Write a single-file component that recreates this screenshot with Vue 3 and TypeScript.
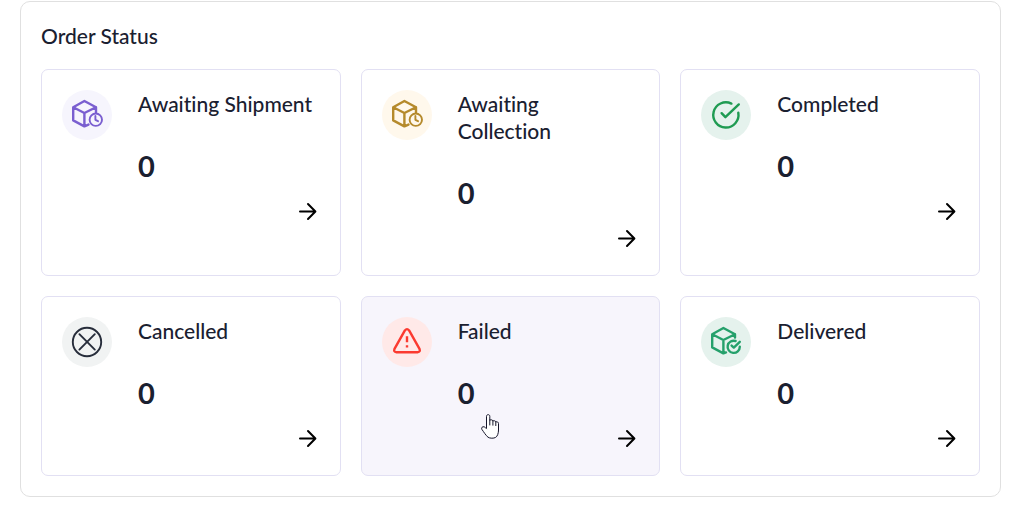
<script setup lang="ts">
type Icon = 'box-clock' | 'check' | 'cross' | 'warning' | 'box-check'

interface Status {
  label: string
  count: number
  icon: Icon
  tone: string
  active?: boolean
}

const statuses: Status[] = [
  { label: 'Awaiting Shipment', count: 0, icon: 'box-clock', tone: 'violet' },
  { label: 'Awaiting Collection', count: 0, icon: 'box-clock', tone: 'gold' },
  { label: 'Completed', count: 0, icon: 'check', tone: 'green' },
  { label: 'Cancelled', count: 0, icon: 'cross', tone: 'grey' },
  { label: 'Failed', count: 0, icon: 'warning', tone: 'red', active: true },
  { label: 'Delivered', count: 0, icon: 'box-check', tone: 'teal' },
]
</script>

<template>
  <section class="panel" aria-labelledby="order-status">
    <h2 id="order-status" class="heading">Order Status</h2>
    <div class="grid">
      <a
        v-for="status in statuses"
        :key="status.label"
        href="#"
        class="card"
        :class="{ active: status.active }"
      >
        <span class="badge" :class="status.tone">
          <svg viewBox="0 0 50 50" aria-hidden="true">
            <template v-if="status.icon === 'box-clock'">
              <path d="M34 22.5V17.2L22.4 11 11.2 17.2V30.4L22.4 36.4 26.5 34.6M11.2 17.2 22.4 23 34 17.2M22.4 23V36.4" />
              <circle class="fine" cx="33.8" cy="29.7" r="6.2" />
              <path class="fine" d="M33.4 26V29.8L36 31.2" />
            </template>
            <template v-else-if="status.icon === 'check'">
              <path d="M30.4 13.6A12.6 12.6 0 1 0 37.3 22.8M20.6 23.2 24.4 27.2 37.8 14.4" />
            </template>
            <template v-else-if="status.icon === 'cross'">
              <circle class="fine" cx="25" cy="25" r="14.2" />
              <path class="fine" d="M17.4 17.2 32.8 32.6M32.8 17.2 17.4 32.6" />
            </template>
            <template v-else-if="status.icon === 'warning'">
              <path d="M22.9 13.4 12.5 31.8Q11.3 35 14.4 35.2H35.6Q38.7 35 37.5 31.8L27.1 13.4Q25 10.8 22.9 13.4Z" />
              <path class="flat" d="M25 19.2V25.2M25 28.3V30.6" />
            </template>
            <template v-else>
              <path d="M34 20.6V17.2L22.4 11 11.2 17.2V30.4L22.4 36.4 25 35.4M11.2 17.2 22.4 23 34 17.2M22.4 23V36.4" />
              <path d="M34.6 24A6.1 6.1 0 1 0 38.8 29.8M30.6 28.6 32.8 30.6 38.8 24.8" />
            </template>
          </svg>
        </span>
        <span class="body">
          <span class="label">{{ status.label }}</span>
          <span class="count">{{ status.count }}</span>
          <svg class="arrow" viewBox="0 0 24 24" aria-hidden="true">
            <path d="M4 12.5H19M12 5 19.4 12.5 12 20" />
          </svg>
        </span>
        <svg v-if="status.active" class="pointer" viewBox="0 0 18 25" aria-hidden="true">
          <path d="M5.5 13.8V2.3C5.5 0.1 8.8 0.1 8.8 2.3V6.2C9.8 5.5 11.6 5.7 11.9 7 13 6.4 14.5 6.8 14.8 7.9 16.2 7.4 17.5 8.2 17.5 9.6V16C17.5 19 16.5 22.5 14.6 23.4 12.8 24.5 8.8 24.5 7 23.2 4.8 21.4 2.8 18 .9 15.4 0 13.6 1.5 12.4 3 12.8 4 13 4.6 13.8 5.5 14.8" />
          <path d="M8.8 6V11M11.9 7V11.2M14.8 8V11.6" />
        </svg>
      </a>
    </div>
  </section>
</template>

<style>
body {
  background: #fff;
}
</style>

<style scoped>
.panel {
  margin: 1px 20px 0;
  padding: 20px;
  border: 1px solid #e0e0e0;
  border-radius: 10px;
  color: #1a2030;
  font-family: Lato, 'Liberation Sans', sans-serif;
  font-variant-ligatures: none;
}

.heading {
  margin: 0 0 20px;
  font-size: 21px;
  font-weight: 500;
  line-height: 27px;
}

.grid {
  display: grid;
  grid-template-columns: repeat(3, 1fr);
  gap: 20px;
}

.card {
  position: relative;
  display: flex;
  gap: 26px;
  padding: 20px 20px 25px;
  border: 1px solid #e2e0f3;
  border-radius: 7px;
  color: inherit;
  text-decoration: none;
}

.card.active {
  background: #f7f5fc;
}

.badge {
  flex: none;
  width: 50px;
  height: 50px;
  border-radius: 50%;
}

.badge svg {
  display: block;
  width: 100%;
  height: 100%;
  fill: none;
  stroke: currentColor;
  stroke-width: 2.4;
  stroke-linecap: round;
  stroke-linejoin: round;
}

.badge .fine {
  stroke-width: 1.9;
}

.badge .flat {
  stroke-linecap: butt;
}

.violet {
  background: #f6f5fd;
  color: #7a5fd0;
}

.gold {
  background: #fff8ec;
  color: #b58a2c;
}

.green {
  background: #e5f2ed;
  color: #1f9b52;
}

.grey {
  background: #f1f3f3;
  color: #272d3b;
}

.red {
  background: #ffe9e8;
  color: #fb3a30;
}

.teal {
  background: #e5f2ed;
  color: #25a06b;
}

.body {
  flex: 1;
  min-width: 0;
  display: flex;
  flex-direction: column;
}

.label {
  padding-right: 4px;
  font-size: 21px;
  font-weight: 500;
  line-height: 27px;
}

.count {
  margin-top: 28px;
  font-size: 29px;
  font-weight: 700;
  line-height: 42px;
}

.arrow {
  align-self: flex-end;
  width: 24px;
  height: 24px;
  margin-top: 12px;
  fill: none;
  stroke: #000;
  stroke-width: 2;
  stroke-linecap: round;
  stroke-linejoin: round;
}

.pointer {
  position: absolute;
  top: 117px;
  left: 119px;
  width: 18px;
  height: 25px;
  fill: #fff;
  stroke: #15152a;
  stroke-width: 1;
  stroke-linecap: round;
  stroke-linejoin: round;
}
</style>
